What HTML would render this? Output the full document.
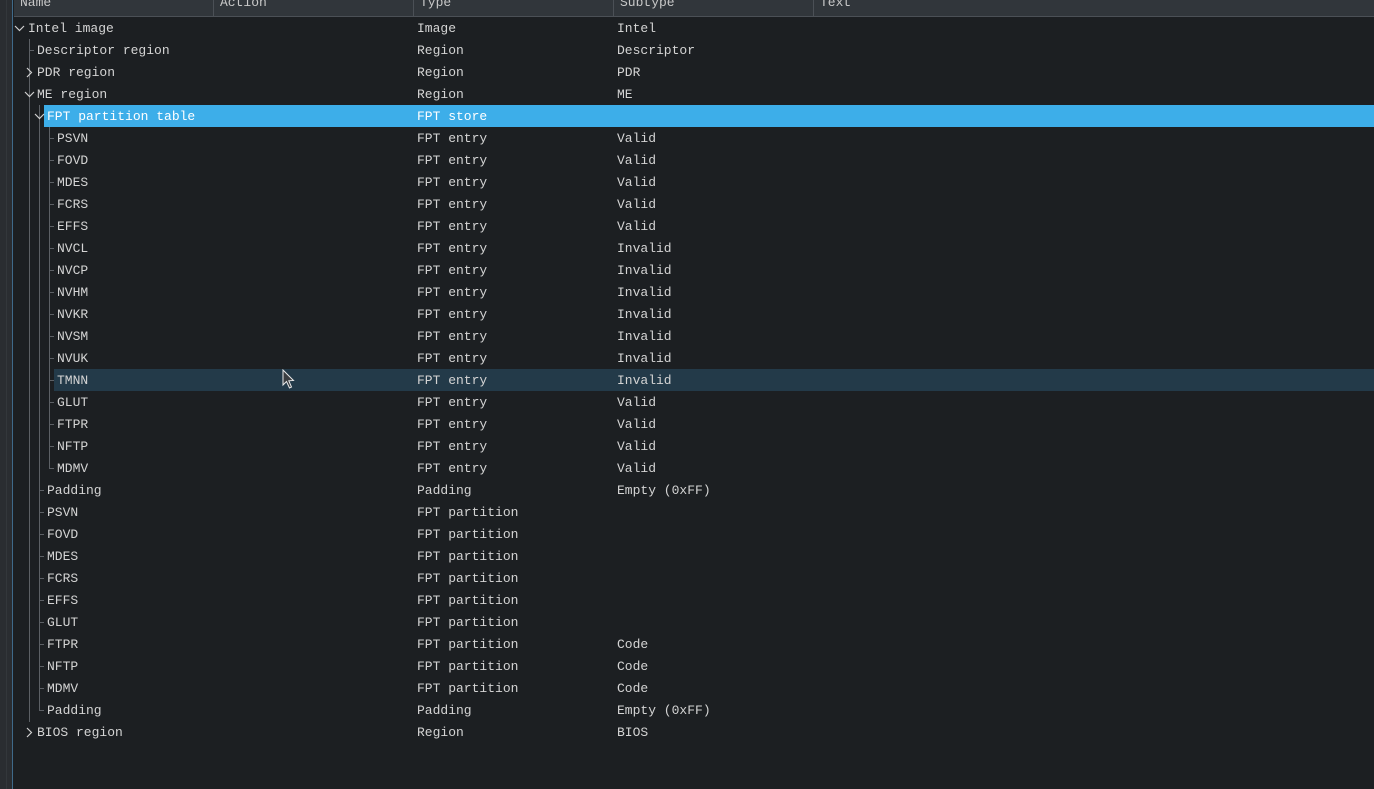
<!DOCTYPE html>
<html><head><meta charset="utf-8"><style>
*{margin:0;padding:0;box-sizing:border-box}
body{width:1374px;height:789px;background:#1c1f22;overflow:hidden;position:relative;font-family:"Liberation Mono",monospace;font-size:13px;color:#d4d4d4}
.strip{position:absolute;left:0;top:0;width:13px;height:789px;background:#2a2d31;border-right:1px solid #3f6a8a}
.strip:before{content:"";position:absolute;left:6px;top:0;width:1px;height:789px;background:#33373b}
.hdr{position:absolute;left:14px;top:0;width:1360px;height:17px;background:#31363b;border-bottom:1px solid #4b5056;color:#c8c8c8}
.hdr span{position:absolute;top:-4px;line-height:14px}
.hdr i{position:absolute;top:0;width:1px;height:16px;background:#4b5056}
.r{position:absolute;left:0;width:1374px;height:22px;line-height:24px;white-space:pre}
.r span{position:absolute;top:0}
.sel{position:absolute;left:44px;right:0;height:22px;background:#3daee9}
.hov{position:absolute;left:54px;right:0;height:22px;background:#233a49}
.v{position:absolute;width:1px;background:#5c6065}
.h{position:absolute;height:1px;background:#5c6065}
.ch{position:absolute;width:11px;height:11px}
</style></head><body>
<div class="strip"></div>
<div class="hdr"><span style="left:6px">Name</span><i style="left:199px"></i><span style="left:206px">Action</span><i style="left:399px"></i><span style="left:406px">Type</span><i style="left:599px"></i><span style="left:606px">Subtype</span><i style="left:799px"></i><span style="left:806px">Text</span></div>

<div class="sel" style="top:105px"></div>
<div class="hov" style="top:369px"></div>

<div class="v" style="left:29px;top:39px;height:683px"></div>
<div class="v" style="left:39px;top:105px;height:606px"></div>
<div class="v" style="left:49px;top:127px;height:342px"></div>
<div class="h" style="left:29px;top:50px;width:5px"></div>
<div class="h" style="left:39px;top:490px;width:5px"></div>
<div class="h" style="left:39px;top:512px;width:5px"></div>
<div class="h" style="left:39px;top:534px;width:5px"></div>
<div class="h" style="left:39px;top:556px;width:5px"></div>
<div class="h" style="left:39px;top:578px;width:5px"></div>
<div class="h" style="left:39px;top:600px;width:5px"></div>
<div class="h" style="left:39px;top:622px;width:5px"></div>
<div class="h" style="left:39px;top:644px;width:5px"></div>
<div class="h" style="left:39px;top:666px;width:5px"></div>
<div class="h" style="left:39px;top:688px;width:5px"></div>
<div class="h" style="left:39px;top:710px;width:5px"></div>
<div class="h" style="left:49px;top:138px;width:5px"></div>
<div class="h" style="left:49px;top:160px;width:5px"></div>
<div class="h" style="left:49px;top:182px;width:5px"></div>
<div class="h" style="left:49px;top:204px;width:5px"></div>
<div class="h" style="left:49px;top:226px;width:5px"></div>
<div class="h" style="left:49px;top:248px;width:5px"></div>
<div class="h" style="left:49px;top:270px;width:5px"></div>
<div class="h" style="left:49px;top:292px;width:5px"></div>
<div class="h" style="left:49px;top:314px;width:5px"></div>
<div class="h" style="left:49px;top:336px;width:5px"></div>
<div class="h" style="left:49px;top:358px;width:5px"></div>
<div class="h" style="left:49px;top:380px;width:5px"></div>
<div class="h" style="left:49px;top:402px;width:5px"></div>
<div class="h" style="left:49px;top:424px;width:5px"></div>
<div class="h" style="left:49px;top:446px;width:5px"></div>
<div class="h" style="left:49px;top:468px;width:5px"></div>

<svg class="ch" style="left:14px;top:23px" viewBox="0 0 11 11"><path d="M1 3 L5.5 7.5 L10 3" fill="none" stroke="#d0d0d0" stroke-width="1.2"/></svg>
<svg class="ch" style="left:24px;top:67px" viewBox="0 0 11 11"><path d="M3 1 L7.5 5.5 L3 10" fill="none" stroke="#d0d0d0" stroke-width="1.2"/></svg>
<svg class="ch" style="left:24px;top:89px" viewBox="0 0 11 11"><path d="M1 3 L5.5 7.5 L10 3" fill="none" stroke="#d0d0d0" stroke-width="1.2"/></svg>
<svg class="ch" style="left:34px;top:111px" viewBox="0 0 11 11"><path d="M1 3 L5.5 7.5 L10 3" fill="none" stroke="#d0d0d0" stroke-width="1.2"/></svg>
<svg class="ch" style="left:24px;top:727px" viewBox="0 0 11 11"><path d="M3 1 L7.5 5.5 L3 10" fill="none" stroke="#d0d0d0" stroke-width="1.2"/></svg>

<div class="r" style="top:17px"><span style="left:28px">Intel image</span><span style="left:417px">Image</span><span style="left:617px">Intel</span></div>
<div class="r" style="top:39px"><span style="left:37px">Descriptor region</span><span style="left:417px">Region</span><span style="left:617px">Descriptor</span></div>
<div class="r" style="top:61px"><span style="left:37px">PDR region</span><span style="left:417px">Region</span><span style="left:617px">PDR</span></div>
<div class="r" style="top:83px"><span style="left:37px">ME region</span><span style="left:417px">Region</span><span style="left:617px">ME</span></div>
<div class="r" style="top:105px;color:#fff"><span style="left:47px">FPT partition table</span><span style="left:417px">FPT store</span></div>
<div class="r" style="top:127px"><span style="left:57px">PSVN</span><span style="left:417px">FPT entry</span><span style="left:617px">Valid</span></div>
<div class="r" style="top:149px"><span style="left:57px">FOVD</span><span style="left:417px">FPT entry</span><span style="left:617px">Valid</span></div>
<div class="r" style="top:171px"><span style="left:57px">MDES</span><span style="left:417px">FPT entry</span><span style="left:617px">Valid</span></div>
<div class="r" style="top:193px"><span style="left:57px">FCRS</span><span style="left:417px">FPT entry</span><span style="left:617px">Valid</span></div>
<div class="r" style="top:215px"><span style="left:57px">EFFS</span><span style="left:417px">FPT entry</span><span style="left:617px">Valid</span></div>
<div class="r" style="top:237px"><span style="left:57px">NVCL</span><span style="left:417px">FPT entry</span><span style="left:617px">Invalid</span></div>
<div class="r" style="top:259px"><span style="left:57px">NVCP</span><span style="left:417px">FPT entry</span><span style="left:617px">Invalid</span></div>
<div class="r" style="top:281px"><span style="left:57px">NVHM</span><span style="left:417px">FPT entry</span><span style="left:617px">Invalid</span></div>
<div class="r" style="top:303px"><span style="left:57px">NVKR</span><span style="left:417px">FPT entry</span><span style="left:617px">Invalid</span></div>
<div class="r" style="top:325px"><span style="left:57px">NVSM</span><span style="left:417px">FPT entry</span><span style="left:617px">Invalid</span></div>
<div class="r" style="top:347px"><span style="left:57px">NVUK</span><span style="left:417px">FPT entry</span><span style="left:617px">Invalid</span></div>
<div class="r" style="top:369px"><span style="left:57px">TMNN</span><span style="left:417px">FPT entry</span><span style="left:617px">Invalid</span></div>
<div class="r" style="top:391px"><span style="left:57px">GLUT</span><span style="left:417px">FPT entry</span><span style="left:617px">Valid</span></div>
<div class="r" style="top:413px"><span style="left:57px">FTPR</span><span style="left:417px">FPT entry</span><span style="left:617px">Valid</span></div>
<div class="r" style="top:435px"><span style="left:57px">NFTP</span><span style="left:417px">FPT entry</span><span style="left:617px">Valid</span></div>
<div class="r" style="top:457px"><span style="left:57px">MDMV</span><span style="left:417px">FPT entry</span><span style="left:617px">Valid</span></div>
<div class="r" style="top:479px"><span style="left:47px">Padding</span><span style="left:417px">Padding</span><span style="left:617px">Empty (0xFF)</span></div>
<div class="r" style="top:501px"><span style="left:47px">PSVN</span><span style="left:417px">FPT partition</span></div>
<div class="r" style="top:523px"><span style="left:47px">FOVD</span><span style="left:417px">FPT partition</span></div>
<div class="r" style="top:545px"><span style="left:47px">MDES</span><span style="left:417px">FPT partition</span></div>
<div class="r" style="top:567px"><span style="left:47px">FCRS</span><span style="left:417px">FPT partition</span></div>
<div class="r" style="top:589px"><span style="left:47px">EFFS</span><span style="left:417px">FPT partition</span></div>
<div class="r" style="top:611px"><span style="left:47px">GLUT</span><span style="left:417px">FPT partition</span></div>
<div class="r" style="top:633px"><span style="left:47px">FTPR</span><span style="left:417px">FPT partition</span><span style="left:617px">Code</span></div>
<div class="r" style="top:655px"><span style="left:47px">NFTP</span><span style="left:417px">FPT partition</span><span style="left:617px">Code</span></div>
<div class="r" style="top:677px"><span style="left:47px">MDMV</span><span style="left:417px">FPT partition</span><span style="left:617px">Code</span></div>
<div class="r" style="top:699px"><span style="left:47px">Padding</span><span style="left:417px">Padding</span><span style="left:617px">Empty (0xFF)</span></div>
<div class="r" style="top:721px"><span style="left:37px">BIOS region</span><span style="left:417px">Region</span><span style="left:617px">BIOS</span></div>

<svg style="position:absolute;left:282px;top:369px" width="14" height="22" viewBox="0 0 14 22"><path d="M1 1 L1 16 L4.5 12.5 L7.5 19 L9.5 18 L6.8 11.8 L11.5 11.5 Z" fill="#3a3d40" stroke="#e8e8e8" stroke-width="1"/></svg>
</body></html>
